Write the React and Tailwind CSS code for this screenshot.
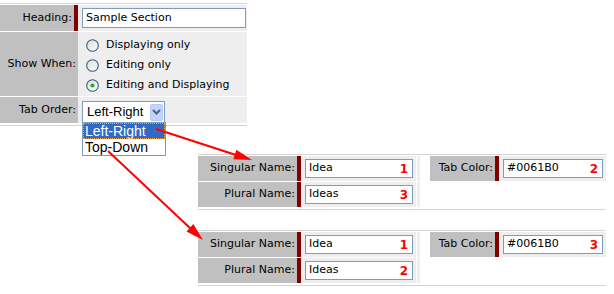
import React from 'react';

function Label({ w, children }) {
  return (
    <div className={`${w} bg-[#c0c0c0] flex items-center justify-end pr-[2px] text-[11px] text-black whitespace-nowrap`}>
      {children}
    </div>
  );
}

function Bar() {
  return <div className="w-[4px] bg-[#800000]" />;
}

function NumInput({ w, value, n }) {
  return (
    <div className={`${w} h-[19px] border border-[#7f9db9] bg-white flex items-center justify-between pl-[3px] pr-[4px] text-[11px]`}>
      <span>{value}</span>
      <span className="text-[#ff0000] font-bold text-[12px]">{n}</span>
    </div>
  );
}

function Radio({ id, checked, label }) {
  return (
    <div className="h-[20px] flex items-center gap-[7px]">
      <svg width="13" height="13" viewBox="0 0 13 13">
        <defs>
          <linearGradient id={id} x1="0" y1="0" x2="1" y2="1">
            <stop offset="0" stopColor="#dcdcd7" />
            <stop offset="1" stopColor="#ffffff" />
          </linearGradient>
        </defs>
        <circle cx="6.5" cy="6.5" r="5.8" fill={`url(#${id})`} stroke="#36608c" strokeWidth="1.1" />
        {checked && <circle cx="6.5" cy="6.5" r="2.1" fill="#2fa82f" />}
      </svg>
      <span className="text-[11px] text-black">{label}</span>
    </div>
  );
}

function NamePanel({ plural, color, mt }) {
  return (
    <div className={`${mt} ml-[198px] w-[408px] border-y border-[#d4d4d4] pt-[1px] pb-[2px] flex flex-col gap-[1px]`}>
      <div className="flex h-[25px]">
        <Label w="w-[99px]">Singular Name:</Label>
        <Bar />
        <div className="w-[115px] bg-[#eeeeee] flex items-center pl-[4px]">
          <NumInput w="w-[108px]" value="Idea" n="1" />
        </div>
        <div className="w-[1px]" />
        <div className="w-[3px] bg-[#eeeeee]" />
        <div className="w-[10px]" />
        <Label w="w-[65px]">Tab Color:</Label>
        <Bar />
        <div className="w-[107px] bg-[#eeeeee] flex items-center pl-[4px]">
          <NumInput w="w-[100px]" value="#0061B0" n={color} />
        </div>
      </div>
      <div className="flex h-[25px]">
        <Label w="w-[99px]">Plural Name:</Label>
        <Bar />
        <div className="w-[115px] bg-[#eeeeee] flex items-center pl-[4px]">
          <NumInput w="w-[108px]" value="Ideas" n={plural} />
        </div>
        <div className="w-[1px]" />
        <div className="w-[3px] bg-[#eeeeee]" />
      </div>
    </div>
  );
}

export default function App() {
  return (
    <div className="relative w-[614px] h-[294px] bg-white overflow-hidden font-['DejaVu_Sans',Verdana,sans-serif] text-black">
      {/* Section settings */}
      <div className="pt-[3px] w-[247px]">
        <div className="border-y border-[#d4d4d4] pt-[1px] pb-[2px] flex flex-col gap-[1px]">
          <div className="flex h-[26px]">
            <Label w="w-[74px]">Heading:</Label>
            <Bar />
            <div className="flex-1 bg-[#eeeeee] flex items-center pl-[4px]">
              <div className="w-[164px] h-[20px] border border-[#7f9db9] bg-white flex items-center pl-[3px] text-[11px]">
                Sample Section
              </div>
            </div>
          </div>
          <div className="flex h-[64px]">
            <Label w="w-[78px]">Show When:</Label>
            <div className="flex-1 bg-[#eeeeee] flex flex-col pt-[3px] pl-[8px]">
              <Radio id="r1" label="Displaying only" />
              <Radio id="r2" label="Editing only" />
              <Radio id="r3" checked label="Editing and Displaying" />
            </div>
          </div>
          <div className="flex h-[26px]">
            <Label w="w-[78px]">Tab Order:</Label>
            <div className="flex-1 bg-[#eeeeee] flex items-end pl-[4px]">
              <div className="w-[83px] h-[22px] border border-[#7f9db9] bg-white flex items-center font-['Liberation_Sans',Arial,sans-serif] text-[13px]">
                <span className="flex-1 pl-[4px]">Left-Right</span>
                <div className="w-[13px] h-[17px] mr-[1px] rounded-[2px] bg-[#c3d3fd] border border-[#b4c8f5] flex items-center justify-center">
                  <svg width="9" height="6" viewBox="0 0 9 6">
                    <path d="M1 1 L4.5 4.5 L8 1" fill="none" stroke="#4d6185" strokeWidth="2" />
                  </svg>
                </div>
              </div>
            </div>
          </div>
        </div>
      </div>

      <NamePanel mt="mt-[28px]" plural="3" color="2" />
      <NamePanel mt="mt-[20px]" plural="2" color="3" />

      {/* Open dropdown list */}
      <div className="absolute left-[82px] top-[122px] w-[84px] border border-[#7f9db9] bg-white font-['Liberation_Sans',Arial,sans-serif] text-[14px] leading-[16px]">
        <div className="h-[16px] bg-[#316ac5] text-white pl-[2px] outline outline-1 outline-dotted outline-[#f0a040] -outline-offset-1">
          Left-Right
        </div>
        <div className="h-[16px] pl-[2px]">Top-Down</div>
      </div>

      {/* Arrows */}
      <svg className="absolute left-0 top-0 pointer-events-none" width="614" height="294" viewBox="0 0 614 294">
        <line x1="156" y1="129" x2="236" y2="155" stroke="#ff0000" strokeWidth="2" />
        <polygon points="252,160 233.4,159.3 236.4,149.7" fill="#ff0000" />
        <line x1="108" y1="151" x2="191" y2="229" stroke="#ff0000" strokeWidth="2" />
        <polygon points="203,240 186.5,231.4 193.3,224.1" fill="#ff0000" />
      </svg>
    </div>
  );
}
